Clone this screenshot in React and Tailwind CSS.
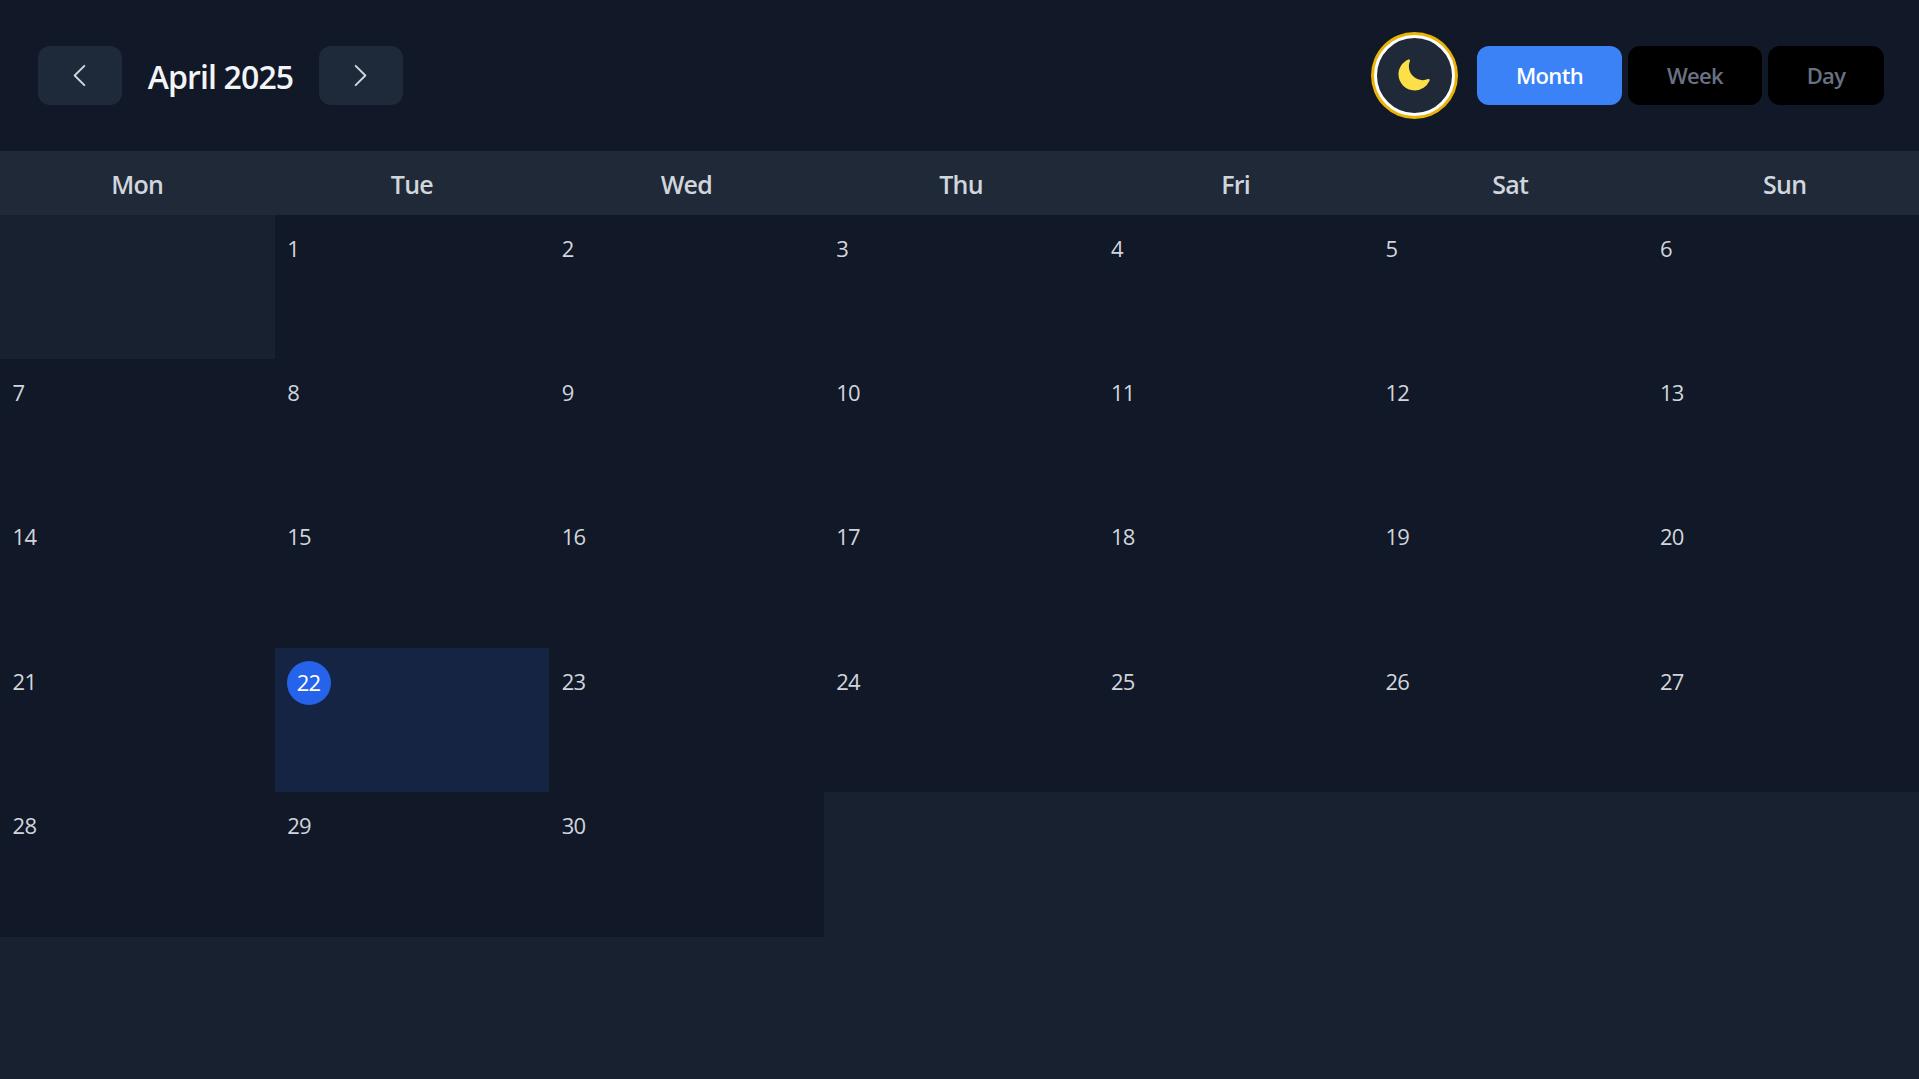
const DAYS = ["Mon", "Tue", "Wed", "Thu", "Fri", "Sat", "Sun"];
const TODAY = 22;
const CELLS = Array.from({ length: 42 }, (_, i) => (i >= 1 && i <= 30 ? i : null));

function NavButton({ label, d }) {
  return (
    <button aria-label={label} className="flex h-[59px] w-[84px] items-center justify-center rounded-xl bg-gray-800 pr-px text-gray-300">
      <svg viewBox="0 0 24 24" className="size-[31px]" fill="none" stroke="currentColor" strokeWidth="1.5" strokeLinecap="round" strokeLinejoin="round">
        <path d={d} />
      </svg>
    </button>
  );
}

function ThemeToggle() {
  return (
    <button aria-label="Toggle theme" className="flex size-[87px] items-center justify-center rounded-full bg-[#eab308]">
      <span className="flex size-[81px] items-center justify-center rounded-full border-[3px] border-white bg-[#1f2937] pr-0.5">
        <svg viewBox="0 0 24 24" className="size-[37px] text-[#fde047]" fill="currentColor">
          <path d="M9.528 1.718a.75.75 0 0 1 .162.819A8.97 8.97 0 0 0 9 6a9 9 0 0 0 9 9 8.97 8.97 0 0 0 3.463-.69.75.75 0 0 1 .981.98 10.503 10.503 0 0 1-9.694 6.46c-5.799 0-10.5-4.7-10.5-10.5 0-4.368 2.667-8.112 6.46-9.694a.75.75 0 0 1 .818.162Z" />
        </svg>
      </span>
    </button>
  );
}

function DayCell({ day }) {
  if (day === null) return <div className="bg-[#18212f]" />;
  if (day === TODAY) {
    return (
      <div className="bg-[#162444] px-3 pt-[13px]">
        <div className="flex size-11 items-center justify-center rounded-full bg-[#2563eb] pb-px text-white">{day}</div>
      </div>
    );
  }
  return <div className="px-[12.6px] pt-[16.6px] text-gray-300">{day}</div>;
}

export default function App() {
  return (
    <div className="flex h-[1079px] w-full flex-col overflow-hidden bg-[#111827] font-['Open_Sans','Noto_Sans',sans-serif]">
      <header className="flex h-[151px] shrink-0 items-center justify-between pl-[38px] pr-[35px]">
        <div className="flex items-center">
          <NavButton label="Previous" d="M15.75 19.5 8.25 12l7.5-7.5" />
          <h1 className="w-[197px] pt-[3px] text-center text-[32px] font-semibold tracking-[-0.027em] text-gray-100">April 2025</h1>
          <NavButton label="Next" d="m8.25 4.5 7.5 7.5-7.5 7.5" />
        </div>
        <div className="flex items-center text-[22px] font-semibold tracking-[-0.03em]">
          <ThemeToggle />
          <button className="ml-[19px] h-[59px] w-[145px] rounded-xl bg-[#3b82f6] text-white">Month</button>
          <button className="ml-1.5 h-[59px] w-[134px] rounded-xl bg-black text-gray-500">Week</button>
          <button className="ml-1.5 h-[59px] w-[116px] rounded-xl bg-black text-gray-500">Day</button>
        </div>
      </header>
      <div className="grid h-16 w-[1922px] shrink-0 grid-cols-7 items-center bg-[#1f2937] pt-px text-center text-[25px] font-semibold leading-9 tracking-[-0.03em] text-gray-300">
        {DAYS.map((d) => (
          <div key={d}>{d}</div>
        ))}
      </div>
      <main className="grid h-[866px] w-[1922px] shrink-0 grid-cols-7 grid-rows-6 text-[22px] leading-8 tracking-[-0.035em]">
        {CELLS.map((day, i) => (
          <DayCell key={i} day={day} />
        ))}
      </main>
    </div>
  );
}
